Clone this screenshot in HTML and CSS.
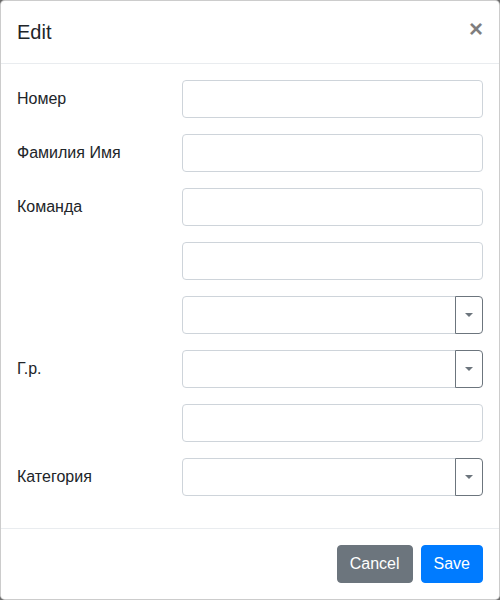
FILE: index.html
```html
<!DOCTYPE html>
<html lang="ru">
<head>
<meta charset="utf-8">
<title>Edit</title>
<link rel="stylesheet" href="styles.css">
</head>
<body>
<div class="modal">
  <div class="modal-header">
    <h5 class="modal-title">Edit</h5>
    <button class="close" type="button">&times;</button>
  </div>
  <div class="modal-body">
    <div class="row"><label class="label">Номер</label><div class="field"><input class="input" type="text"></div></div>
    <div class="row"><label class="label">Фамилия Имя</label><div class="field"><input class="input" type="text"></div></div>
    <div class="row"><label class="label">Команда</label><div class="field"><input class="input" type="text"></div></div>
    <div class="row"><label class="label"></label><div class="field"><input class="input" type="text"></div></div>
    <div class="row"><label class="label"></label><div class="field group"><input class="input" type="text"><button class="toggle" type="button"><span class="caret"></span></button></div></div>
    <div class="row"><label class="label">Г.р.</label><div class="field group"><input class="input" type="text"><button class="toggle" type="button"><span class="caret"></span></button></div></div>
    <div class="row"><label class="label"></label><div class="field"><input class="input" type="text"></div></div>
    <div class="row"><label class="label">Категория</label><div class="field group"><input class="input" type="text"><button class="toggle" type="button"><span class="caret"></span></button></div></div>
  </div>
  <div class="modal-footer">
    <button class="btn btn-secondary" type="button">Cancel</button>
    <button class="btn btn-primary" type="button">Save</button>
  </div>
</div>
</body>
</html>
```
FILE: styles.css
```css
* { box-sizing: border-box; }
html, body { margin: 0; padding: 0; }
body {
  background: #6b6b6b;
  font-family: "Liberation Sans", Arial, sans-serif;
  font-size: 16px;
  line-height: 1.5;
  color: #212529;
}
.modal {
  width: 500px;
  height: 600px;
  background: #fff;
  border: 1px solid rgba(0,0,0,.2);
  border-radius: 4.8px;
  display: flex;
  flex-direction: column;
  overflow: hidden;
}
.modal-header {
  display: flex;
  align-items: flex-start;
  padding: 16px;
  border-bottom: 1px solid #e9ecef;
}
.modal-title {
  margin: 0;
  font-size: 20px;
  font-weight: 500;
  line-height: 30px;
}
.close {
  margin: -16px -16px -16px auto;
  padding: 16px;
  background: transparent;
  border: 0;
  font-family: inherit;
  font-size: 24px;
  font-weight: 700;
  line-height: 1;
  color: #000;
  opacity: .5;
  cursor: pointer;
}
.modal-body {
  flex: 1;
  padding: 16px;
}
.row {
  display: flex;
  margin: 0 -15px 16px;
}
.label {
  flex: 0 0 33.3333%;
  padding: 7px 15px;
  line-height: 24px;
}
.field {
  flex: 0 0 66.6667%;
  padding: 0 15px;
}
.input {
  display: block;
  width: 100%;
  height: 38px;
  padding: 6px 12px;
  font-family: inherit;
  font-size: 16px;
  color: #495057;
  background: #fff;
  border: 1px solid #ced4da;
  border-radius: 4px;
  outline: none;
}
.group { display: flex; }
.group .input {
  flex: 1;
  min-width: 0;
  border-radius: 4px 0 0 4px;
}
.toggle {
  flex: 0 0 28px;
  height: 38px;
  margin-left: -1px;
  padding: 0;
  background: #fff;
  border: 1px solid #6c757d;
  border-radius: 0 4px 4px 0;
  display: flex;
  align-items: center;
  justify-content: center;
}
.caret {
  display: block;
  width: 0;
  height: 0;
  border-top: 4px solid #6c757d;
  border-left: 4px solid transparent;
  border-right: 4px solid transparent;
}
.modal-footer {
  display: flex;
  justify-content: flex-end;
  align-items: center;
  padding: 12px;
  border-top: 1px solid #e9ecef;
}
.btn {
  margin: 4px;
  height: 38px;
  padding: 6px 12px;
  font-family: inherit;
  font-size: 16px;
  line-height: 24px;
  color: #fff;
  border: 1px solid transparent;
  border-radius: 4px;
}
.btn-secondary { background: #6c757d; border-color: #6c757d; }
.btn-primary { background: #007bff; border-color: #007bff; }
```
